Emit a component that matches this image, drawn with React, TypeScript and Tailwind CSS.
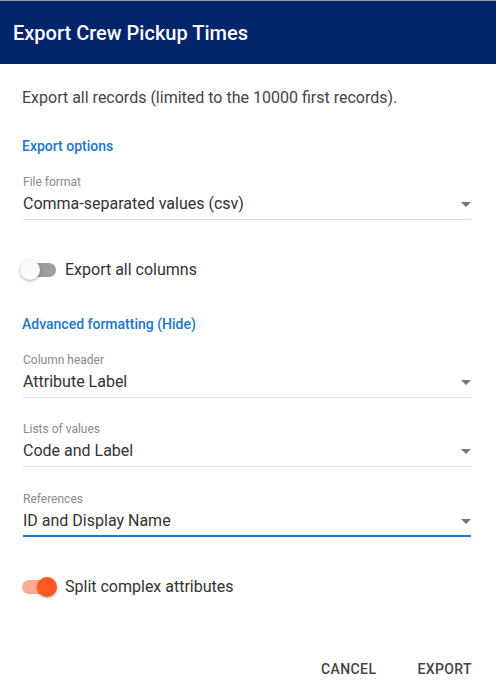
import React, { useState } from 'react';

const FONT = { fontFamily: 'Roboto, "Liberation Sans", sans-serif' };

const Arrow: React.FC = () => (
  <svg width="10" height="5" viewBox="0 0 10 5" className="shrink-0">
    <path d="M0 0 L10 0 L5 5 Z" fill="#757575" />
  </svg>
);

type SelectProps = {
  label: string;
  value: string;
  focused?: boolean;
  className?: string;
};

const SelectField: React.FC<SelectProps> = ({ label, value, focused, className = '' }) => (
  <div className={className}>
    <div className="text-[12px] leading-4 text-[#8a8a8a]">{label}</div>
    <div
      className={`mt-[2px] flex items-center justify-between ${
        focused ? 'pb-[2px] border-b-2 border-[#1976d2]' : 'pb-[3px] border-b border-[#dcdcdc]'
      }`}
    >
      <span className="text-[16px] leading-6 text-[#333]">{value}</span>
      <Arrow />
    </div>
  </div>
);

const Toggle: React.FC<{ on: boolean; onClick: () => void; label: string; className?: string }> = ({
  on,
  onClick,
  label,
  className = '',
}) => (
  <div className={`flex items-center h-6 ${className}`}>
    <button onClick={onClick} className="relative w-[38px] h-[20px] ml-[-3px] shrink-0">
      <span
        className={`absolute left-[2px] top-[3px] w-[34px] h-[14px] rounded-full ${
          on ? 'bg-[#ffab91]' : 'bg-[#9e9e9e]'
        }`}
      />
      <span
        className={`absolute top-0 w-[20px] h-[20px] rounded-full shadow-[0_1px_3px_rgba(0,0,0,0.35)] ${
          on ? 'left-[17px] bg-[#ff5722]' : 'left-0 bg-[#fafafa]'
        }`}
      />
    </button>
    <span className="ml-[7px] text-[16px] leading-6 text-[#333]">{label}</span>
  </div>
);

export default function App() {
  const [allColumns, setAllColumns] = useState(false);
  const [split, setSplit] = useState(true);

  return (
    <div className="w-[496px] h-[696px] bg-white flex flex-col border-t border-[#9a9a9a]" style={FONT}>
      <div className="h-[63px] bg-[#03256b] flex items-center px-[13px]">
        <h1 className="text-[20px] font-medium text-white">Export Crew Pickup Times</h1>
      </div>

      <div className="flex-1 pl-[23px] pr-[25px] pt-[22px]">
        <p className="text-[16px] leading-6 text-[#444] -ml-[1px]">
          Export all records (limited to the 10000 first records).
        </p>

        <div className="mt-[26px] text-[14px] leading-5 font-medium text-[#1976d2] -ml-[1px]">
          Export options
        </div>

        <SelectField className="mt-[18px]" label="File format" value="Comma-separated values (csv)" />

        <Toggle
          className="mt-[38px]"
          on={allColumns}
          onClick={() => setAllColumns(!allColumns)}
          label="Export all columns"
        />

        <div className="mt-[32px] text-[14px] leading-5 font-medium text-[#1976d2] -ml-[1px]">
          Advanced formatting (Hide)
        </div>

        <SelectField className="mt-[18px]" label="Column header" value="Attribute Label" />
        <SelectField className="mt-[23px]" label="Lists of values" value="Code and Label" />
        <SelectField className="mt-[24px]" label="References" value="ID and Display Name" focused />

        <Toggle
          className="mt-[38px]"
          on={split}
          onClick={() => setSplit(!split)}
          label="Split complex attributes"
        />
      </div>

      <div className="flex justify-end gap-[25px] pr-[16px] pb-[9px]">
        <button className="h-9 px-2 text-[14px] font-medium tracking-[0.4px] text-[#444]">CANCEL</button>
        <button className="h-9 px-2 text-[14px] font-medium tracking-[0.4px] text-[#444]">EXPORT</button>
      </div>
    </div>
  );
}
